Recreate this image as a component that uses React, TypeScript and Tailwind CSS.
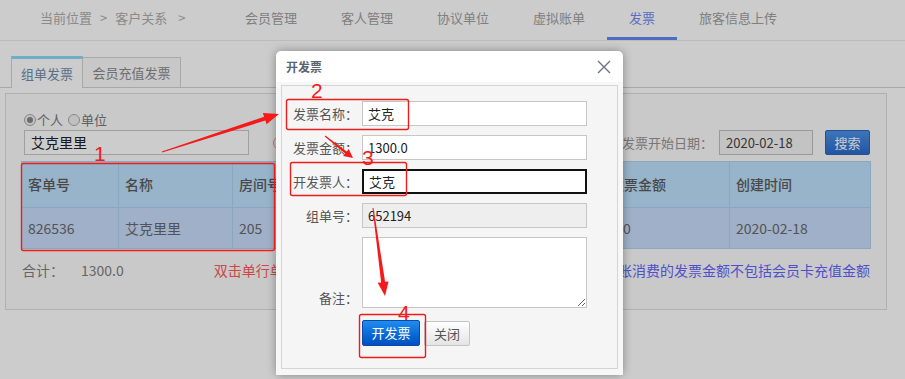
import React from "react";

type Pt = [number, number];

function arrowPoints(tail: Pt, tip: Pt, w0: number, w1: number, L: number, H: number): string {
  const dx = tip[0] - tail[0];
  const dy = tip[1] - tail[1];
  const len = Math.hypot(dx, dy);
  const ux = dx / len;
  const uy = dy / len;
  const nx = -uy;
  const ny = ux;
  const neck: Pt = [tip[0] - ux * L, tip[1] - uy * L];
  const p = (b: Pt, s: number): string => `${(b[0] + nx * s).toFixed(2)},${(b[1] + ny * s).toFixed(2)}`;
  return [
    p(tail, w0 / 2),
    p(neck, w1 / 2),
    p(neck, H),
    `${tip[0]},${tip[1]}`,
    p(neck, -H),
    p(neck, -w1 / 2),
    p(tail, -w0 / 2),
  ].join(" ");
}

const navItems = ["会员管理", "客人管理", "协议单位", "虚拟账单", "发票", "旅客信息上传"];

export default function App() {
  return (
    <div className="relative w-[905px] h-[379px] overflow-hidden bg-white font-['Noto_Sans_CJK_SC','Liberation_Sans',sans-serif]">
      {/* top nav */}
      <div className="flex h-[41px] border-b border-[#ececec]">
        <div className="w-[223px] shrink-0 pl-[40px] pt-[10px] text-[13px] leading-[16px] text-[#adadad] flex">
          <span>当前位置</span>
          <span className="mx-[8px]">&gt;</span>
          <span>客户关系</span>
          <span className="ml-[11px]">&gt;</span>
        </div>
        {navItems.map((n) => (
          <div
            key={n}
            className={
              n === "发票"
                ? "h-[40px] px-[22px] pt-[10px] text-[13px] leading-[16px] text-[#708cf0] border-b-[3px] border-[#6389f0]"
                : "h-[40px] px-[22px] pt-[10px] text-[13px] leading-[16px] text-[#a0a0a0]"
            }
          >
            {n}
          </div>
        ))}
      </div>

      {/* tabs */}
      <div className="mt-[15px] flex border-b border-[#d2d2d2] pl-[11px]">
        <div className="-mb-px w-[72px] h-[32px] border-t-[3px] border-t-[#8cdafa] border-x border-[#d2d2d2] bg-white flex items-center justify-center text-[13px] text-[#6e8caa]">
          组单发票
        </div>
        <div className="mt-[1px] w-[98px] h-[30px] border-t border-r border-[#d2d2d2] bg-[#fafafa] flex items-center justify-center text-[13px] text-[#8a8a8a]">
          会员充值发票
        </div>
      </div>

      {/* panel */}
      <div className="mt-[5px] ml-[5px] w-[882px] h-[217px] border border-[#dcdcdc] bg-[#fcfcfc] px-[15px] pt-[18px]">
        <div className="flex items-center h-[15px] text-[13px] leading-[15px] text-[#777]">
          <span className="ml-[3px] w-[12px] h-[12px] rounded-full border border-[#aaa] bg-[#f0f0f0] flex items-center justify-center">
            <span className="w-[6px] h-[6px] rounded-full bg-[#888]" />
          </span>
          <span className="ml-[1px]">个人</span>
          <span className="ml-[5px] w-[12px] h-[12px] rounded-full border border-[#aaa] bg-[#f0f0f0]" />
          <span className="ml-[1px]">单位</span>
        </div>
        <div className="mt-[3px] flex items-center h-[25px]">
          <div className="ml-[3px] w-[225px] h-[25px] border border-[#c8c8c8] bg-white pl-[6px] text-[14px] leading-[23px] text-[#222]">
            艾克里里
          </div>
          <span className="ml-[24px] w-[14px] h-[14px] rounded-full border border-[#ff8a8a]" />
          <span className="ml-auto text-[13px] text-[#959595]">发票开始日期：</span>
          <div className="ml-[6px] w-[94px] h-[25px] border border-[#c0c0c0] bg-[#f4f4f4] pl-[6px] text-[13px] leading-[23px] text-[#444]">
            2020-02-18
          </div>
          <div className="ml-[12px] mr-[1px] w-[45px] h-[25px] rounded-[2px] border border-[#2f66b8] bg-gradient-to-b from-[#4e92e8] to-[#2c6ccc] text-white text-[13px] leading-[23px] text-center">
            搜索
          </div>
        </div>
        <table className="mt-[6px] w-[849px] table-fixed border-collapse text-[14px]">
          <colgroup>
            <col className="w-[97px]" />
            <col className="w-[114px]" />
            <col className="w-[124px]" />
            <col className="w-[124px]" />
            <col className="w-[123px]" />
            <col className="w-[126px]" />
            <col className="w-[141px]" />
          </colgroup>
          <thead>
            <tr className="h-[46px] bg-[#bee1fd]">
              {["客单号", "名称", "房间号", "发票名称", "开票人", "发票金额", "创建时间"].map((h) => (
                <th key={h} className="border border-[#acd2f0] pl-[6px] text-left font-medium text-[#5c5c5c]">
                  {h}
                </th>
              ))}
            </tr>
          </thead>
          <tbody>
            <tr className="h-[41px] bg-[#c7dcfa]">
              {["826536", "艾克里里", "205", "艾克", "艾克", "1300.0", "2020-02-18"].map((d, i) => (
                <td key={i} className={i === 5 ? "border border-[#acd2f0] pl-[6px] -indent-[22px] text-[#6a6a6a]" : "border border-[#acd2f0] pl-[6px] text-[#6a6a6a]"}>
                  {d}
                </td>
              ))}
            </tr>
          </tbody>
        </table>
        <div className="mt-[12px] flex items-center h-[18px] text-[14px]">
          <span className="ml-[1px] text-[#808080]">合计：</span>
          <span className="ml-[17px] text-[#808080]">1300.0</span>
          <span className="ml-[90px] text-[#ff5a5a]">双击单行单据开发票</span>
          <span className="ml-auto mr-[1px] text-[#6464ff]">注：组单挂账消费的发票金额不包括会员卡充值金额</span>
        </div>
      </div>

      {/* dim overlay */}
      <div className="absolute inset-0 bg-black/20" />

      {/* modal */}
      <div className="absolute left-[276px] top-[51px] w-[347px] h-[324px] rounded-[5px] bg-white shadow-[0_0_10px_rgba(0,0,0,0.35)] flex flex-col">
        <div className="h-[31px] flex items-center justify-between pl-[10px] pr-[12px]">
          <span className="text-[12px] font-bold text-[#5a6472]">开发票</span>
          <svg width="14" height="14" viewBox="0 0 14 14">
            <path d="M1 1 L13 13 M13 1 L1 13" stroke="#6b7280" strokeWidth="1.4" fill="none" />
          </svg>
        </div>
        <div className="flex-1 bg-[#f7f7f7] px-[5px] pt-[3px] pb-[6px]">
          <div className="h-full border border-[#d4d4d4] bg-[#f5f5f5] pt-[15px] flex flex-col gap-[9px] text-[13px]">
            {[
              { l: "发票名称：", v: "艾克", cls: "border border-[#c6c6c6] bg-white" },
              { l: "发票金额：", v: "1300.0", cls: "border border-[#c6c6c6] bg-white" },
              { l: "开发票人：", v: "艾克", cls: "border-2 border-[#111] bg-white" },
              { l: "组单号：", v: "652194", cls: "border border-[#c6c6c6] bg-[#eeeeee]" },
            ].map((r) => (
              <div key={r.l} className="flex items-center h-[25px]">
                <span className="w-[76px] text-right text-[#555]">{r.l}</span>
                <div className={"ml-[4px] w-[225px] h-[25px] pl-[5px] flex items-center text-[#222] " + r.cls}>{r.v}</div>
              </div>
            ))}
            <div className="flex items-end">
              <span className="w-[76px] text-right text-[#555] pb-[1px]">备注：</span>
              <textarea className="ml-[4px] w-[225px] h-[71px] border border-[#c6c6c6] bg-white block" />
            </div>
            <div className="mt-[3px] flex items-start pl-[80px]">
              <div className="w-[58px] h-[26px] rounded-[2px] border border-[#0a4aa8] bg-gradient-to-b from-[#1f8cf0] to-[#004fc0] text-white text-[13px] leading-[24px] text-center">
                开发票
              </div>
              <div className="ml-[4px] mt-[1px] w-[46px] h-[25px] rounded-[2px] border border-[#c4c4c4] bg-gradient-to-b from-white to-[#e4e4e4] text-[#555] text-[13px] leading-[23px] text-center">
                关闭
              </div>
            </div>
          </div>
        </div>
      </div>

      {/* annotations */}
      <svg className="absolute inset-0 pointer-events-none" width="905" height="379" viewBox="0 0 905 379">
        <g fill="none" stroke="#f01c1c" strokeWidth="1.4">
          <rect x="21.5" y="163.5" width="253" height="87" rx="2" />
          <rect x="286.5" y="99.5" width="122" height="30" rx="2" />
          <rect x="290.5" y="162.5" width="116" height="33" rx="2" />
          <rect x="359.5" y="314.5" width="66" height="43" rx="2" />
        </g>
        <g fill="#f51a1a">
          <polygon points={arrowPoints([162, 152], [279, 114], 1, 4, 15, 6)} />
          <polygon points={arrowPoints([325, 136], [353, 158], 1, 2.5, 9, 4.5)} />
          <polygon points={arrowPoints([373, 208], [385, 296], 1, 4, 14, 5.5)} />
        </g>
        <g fill="#f51a1a" fontFamily="'Liberation Sans', Arial, sans-serif" fontSize="21">
          <text x="94" y="161">1</text>
          <text x="311" y="98">2</text>
          <text x="362" y="165">3</text>
          <text x="398" y="320">4</text>
        </g>
      </svg>
    </div>
  );
}
